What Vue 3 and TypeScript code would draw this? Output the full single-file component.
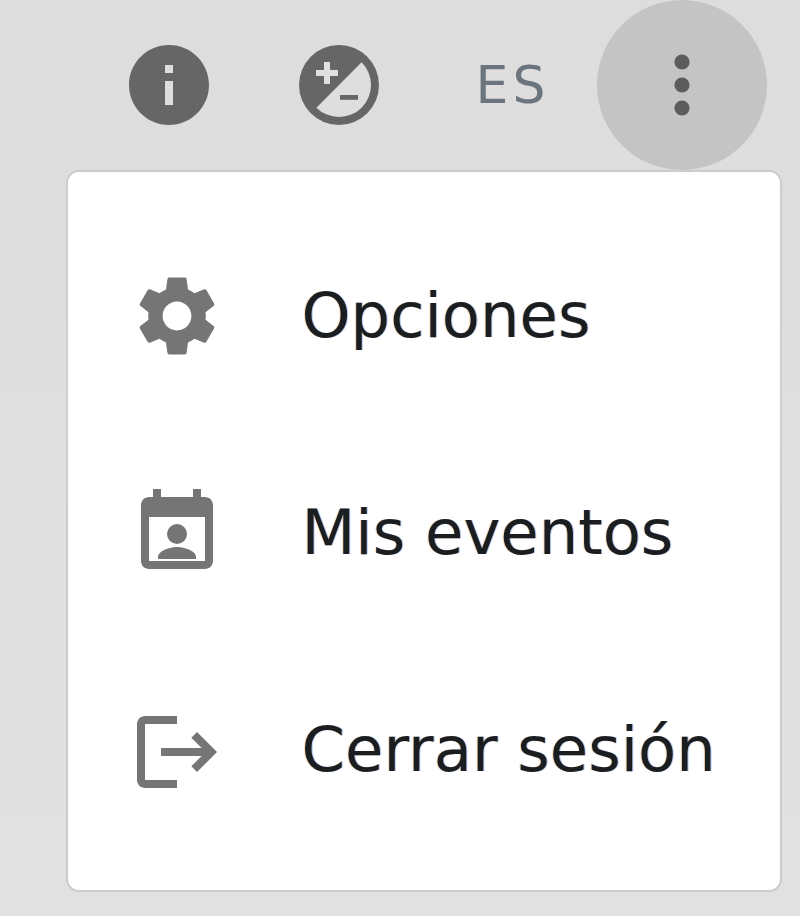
<template>
  <div class="page">
    <header class="topbar">
      <button class="top-btn">
        <svg class="icon icon--dark" viewBox="0 0 24 24"><path d="M12 2C6.48 2 2 6.48 2 12s4.48 10 10 10 10-4.48 10-10S17.52 2 12 2zm1 15h-2v-6h2v6zm0-8h-2V7h2v2z" /></svg>
      </button>
      <button class="top-btn">
        <svg class="icon icon--dark" viewBox="0 0 24 24">
          <path fill-rule="evenodd" d="M12 2a10 10 0 1 0 0 20 10 10 0 0 0 0-20zM6.34 17.66L17.66 6.34A8 8 0 0 1 6.34 17.66z" />
          <path class="plus" d="M8.25 6.25h1.5V8.25h2v1.5h-2v2h-1.5v-2h-2v-1.5h2z" />
          <rect x="12.25" y="14.5" width="4.5" height="1.2" />
        </svg>
      </button>
      <button class="top-btn top-btn--lang">ES</button>
      <button class="top-btn top-btn--active">
        <svg class="icon icon--dots" viewBox="0 0 24 24">
          <circle cx="12" cy="6.25" r="1.9" />
          <circle cx="12" cy="12" r="1.9" />
          <circle cx="12" cy="17.75" r="1.9" />
        </svg>
      </button>
    </header>

    <nav class="menu">
      <a v-for="item in items" :key="item.label" class="menu-item">
        <svg class="icon" :class="item.cls" viewBox="0 0 24 24">
          <path v-for="d in item.paths" :key="d" :d="d" />
        </svg>
        <span class="menu-label">{{ item.label }}</span>
      </a>
    </nav>
  </div>
</template>

<script setup lang="ts">
const items = [
  {
    label: 'Opciones',
    cls: 'icon--gear',
    paths: [
      'M19.14 12.94c.04-.3.06-.61.06-.94 0-.32-.02-.64-.07-.94l2.03-1.58c.18-.14.23-.41.12-.61l-1.92-3.32c-.12-.22-.37-.29-.59-.22l-2.39.96c-.5-.38-1.03-.7-1.62-.94l-.36-2.54c-.04-.24-.24-.41-.48-.41h-3.84c-.24 0-.43.17-.47.41l-.36 2.54c-.59.24-1.13.57-1.62.94l-2.39-.96c-.22-.08-.47 0-.59.22L2.74 8.87c-.12.21-.08.47.12.61l2.03 1.58c-.05.3-.09.63-.09.94s.02.64.07.94l-2.03 1.58c-.18.14-.23.41-.12.61l1.92 3.32c.12.22.37.29.59.22l2.39-.96c.5.38 1.03.7 1.62.94l.36 2.54c.05.24.24.41.48.41h3.84c.24 0 .44-.17.47-.41l.36-2.54c.59-.24 1.13-.56 1.62-.94l2.39.96c.22.08.47 0 .59-.22l1.92-3.32c.12-.22.07-.47-.12-.61l-2.01-1.58zM12 15.6c-1.98 0-3.6-1.62-3.6-3.6s1.62-3.6 3.6-3.6 3.6 1.62 3.6 3.6-1.62 3.6-3.6 3.6z',
    ],
  },
  {
    label: 'Mis eventos',
    cls: 'icon--calendar',
    paths: [
      'M19 3h-1V1h-2v2H8V1H6v2H5c-1.11 0-2 .9-2 2v14c0 1.1.89 2 2 2h14c1.1 0 2-.9 2-2V5c0-1.1-.9-2-2-2zm0 16H5V8h14v11z',
      'M12 9.75a2.5 2.5 0 1 0 0 5 2.5 2.5 0 0 0 0-5z',
      'M7.25 18.5V18c0-1.6 3.2-2.5 4.75-2.5s4.75.9 4.75 2.5v.5z',
    ],
  },
  {
    label: 'Cerrar sesión',
    cls: 'icon--logout',
    paths: [
      'M17 7l-1.41 1.41L18.17 11H8v2h10.17l-2.58 2.58L17 17l5-5zM4 5h8V3H4c-1.1 0-2 .9-2 2v14c0 1.1.9 2 2 2h8v-2H4V5z',
    ],
  },
]
</script>

<style>
html,
body {
  margin: 0;
  background: #e0e0e0;
}
</style>

<style scoped>
.page {
  width: 800px;
  height: 916px;
  overflow: hidden;
  background: linear-gradient(180deg, #dddddd 0%, #e1e1e1 100%);
  font-family: "DejaVu Sans", sans-serif;
  filter: blur(0.7px);
}
.topbar {
  display: flex;
  justify-content: flex-end;
  height: 170px;
  padding-right: 33px;
}
.top-btn {
  display: flex;
  align-items: center;
  justify-content: center;
  width: 170px;
  height: 170px;
  padding: 0;
  border: none;
  border-radius: 50%;
  background: none;
  font-family: inherit;
}
.top-btn--lang {
  width: 173px;
  padding-left: 4px;
  font-size: 52px;
  letter-spacing: 4px;
  color: #6c757d;
}
.top-btn--active {
  background: #c4c4c4;
}
.icon {
  flex: none;
  width: 96px;
  height: 96px;
  fill: #757575;
}
.icon--dark {
  fill: #666666;
}
.icon--dots {
  fill: #5c5c5c;
}
.plus {
  fill: #e0e0e0;
}
.icon--gear {
  margin-top: -2px;
}
.icon--calendar {
  margin-top: -2px;
}
.icon--logout {
  margin-top: 2px;
}
.menu {
  box-sizing: border-box;
  width: 716px;
  height: 722px;
  margin-left: 66px;
  padding: 36px 0 30px;
  background: #fff;
  border: 2.5px solid #cccccc;
  border-radius: 13px;
}
.menu-item {
  display: flex;
  align-items: center;
  gap: 76.5px;
  height: 217px;
  padding-left: 61px;
  font-size: 62.4px;
  color: #1b1e21;
}
.menu-label {
  margin-bottom: 2px;
  text-shadow: -1px 0 rgba(240, 150, 50, 0.35), 1px 0 rgba(40, 100, 220, 0.35);
}
</style>
